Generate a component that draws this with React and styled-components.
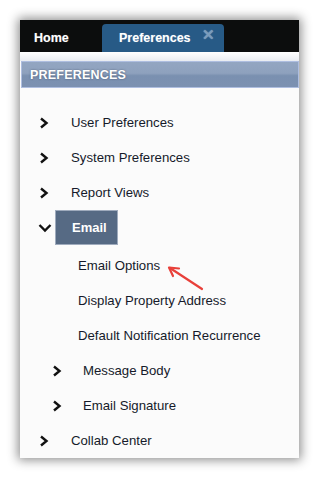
import React from "react";
import styled, { createGlobalStyle } from "styled-components";

const GlobalStyle = createGlobalStyle`
  html, body {
    margin: 0;
    padding: 0;
    background: #ffffff;
  }
  body {
    font-family: "Liberation Sans", Arial, sans-serif;
  }
`;

const Page = styled.div`
  width: 320px;
  height: 480px;
  padding: 20px 0 0 20px;
  box-sizing: border-box;
`;

const Panel = styled.div`
  position: relative;
  width: 279px;
  height: 438px;
  background: #fbfbfb;
  box-shadow: 0 0 10px 2px rgba(0, 0, 0, 0.45);
  display: flex;
  flex-direction: column;
`;

const TabBar = styled.div`
  height: 32px;
  background: #0c0d0d;
  display: flex;
  align-items: flex-end;
  box-sizing: border-box;
`;

const Tab = styled.div`
  display: flex;
  align-items: center;
  box-sizing: border-box;
  height: 28px;
  width: ${p => p.width}px;
  padding-left: ${p => p.pad}px;
  background: ${p => (p.active ? "#275a86" : "transparent")};
  border-radius: 4px 4px 0 0;
  color: #ffffff;
  font-weight: bold;
  font-size: 12.5px;
  text-shadow: 0 0 1px rgba(255, 255, 255, 0.4);
`;

const Close = styled.span`
  margin-left: 11px;
  margin-top: -5px;
  color: #7a9cbc;
  font-size: 15px;
  font-weight: bold;
`;

const Gap = styled.div`
  height: 10px;
  background: linear-gradient(#ffffff 0, #f6f7f9 4px, #e9ecf1 9px, #dfe4ec 10px);
`;

const Header = styled.div`
  height: 27px;
  margin-left: 1px;
  box-sizing: border-box;
  border: 1px solid #aebee0;
  background: linear-gradient(#93a6c2 0%, #8ea1bd 45%, #7a90b0 55%, #7c91b1 100%);
  display: flex;
  align-items: center;
  padding-left: 8px;
  padding-top: 1px;
  color: #ffffff;
  font-weight: bold;
  font-size: 12.5px;
  letter-spacing: 0.2px;
  text-shadow: 0 0 2px rgba(40, 50, 70, 0.6);
`;

const List = styled.div`
  display: flex;
  flex-direction: column;
  padding-top: 17px;
`;

const Row = styled.div`
  display: flex;
  align-items: center;
  height: 35px;
  padding-left: ${p => p.indent}px;
  margin-bottom: ${p => p.extra || 0}px;
  color: #151a2a;
  font-size: 13.2px;
`;

const Icon = styled.span`
  width: ${p => p.w}px;
  display: flex;
  align-items: center;
`;

const Label = styled.span``;

const Selected = styled.span`
  display: flex;
  align-items: center;
  height: 35px;
  width: 63px;
  box-sizing: border-box;
  padding-left: 16px;
  margin-left: 3px;
  background: #566a84;
  border: 1px solid #9fabbd;
  color: #ffffff;
  font-weight: bold;
  font-size: 13px;
`;

const Pointer = styled.svg`
  position: absolute;
  left: 144px;
  top: 244px;
`;

const ChevronRight = () => (
  <svg width="10" height="12" viewBox="0 0 10 12">
    <polyline points="2,1.5 7.5,6 2,10.5" fill="none" stroke="#111" strokeWidth="2.4" />
  </svg>
);

const ChevronDown = () => (
  <svg width="14" height="10" viewBox="0 0 14 10">
    <polyline points="1.5,2 7,7.5 12.5,2" fill="none" stroke="#111" strokeWidth="2.4" />
  </svg>
);

const topItems = ["User Preferences", "System Preferences", "Report Views"];
const emailLinks = ["Email Options", "Display Property Address", "Default Notification Recurrence"];
const emailGroups = ["Message Body", "Email Signature"];

export default function App() {
  return (
    <Page>
      <GlobalStyle />
      <Panel>
        <TabBar>
          <Tab width={82} pad={14}>Home</Tab>
          <Tab active width={122} pad={17}>
            Preferences<Close>✕</Close>
          </Tab>
        </TabBar>
        <Gap />
        <Header>PREFERENCES</Header>
        <List>
          {topItems.map(t => (
            <Row key={t} indent={19}>
              <Icon w={32}><ChevronRight /></Icon>
              <Label>{t}</Label>
            </Row>
          ))}
          <Row indent={18} extra={3}>
            <Icon w={14}><ChevronDown /></Icon>
            <Selected>Email</Selected>
          </Row>
          {emailLinks.map(t => (
            <Row key={t} indent={58}>
              <Label>{t}</Label>
            </Row>
          ))}
          {emailGroups.map(t => (
            <Row key={t} indent={32}>
              <Icon w={31}><ChevronRight /></Icon>
              <Label>{t}</Label>
            </Row>
          ))}
          <Row indent={19}>
            <Icon w={32}><ChevronRight /></Icon>
            <Label>Collab Center</Label>
          </Row>
        </List>
        <Pointer width="50" height="30" viewBox="0 0 50 30">
          <line x1="38" y1="25" x2="6" y2="4" stroke="#e8403a" strokeWidth="2.2" strokeLinecap="round" />
          <polyline points="15,4.5 5,3.5 9,12" fill="none" stroke="#e8403a" strokeWidth="2.2" strokeLinecap="round" strokeLinejoin="round" />
        </Pointer>
      </Panel>
    </Page>
  );
}
